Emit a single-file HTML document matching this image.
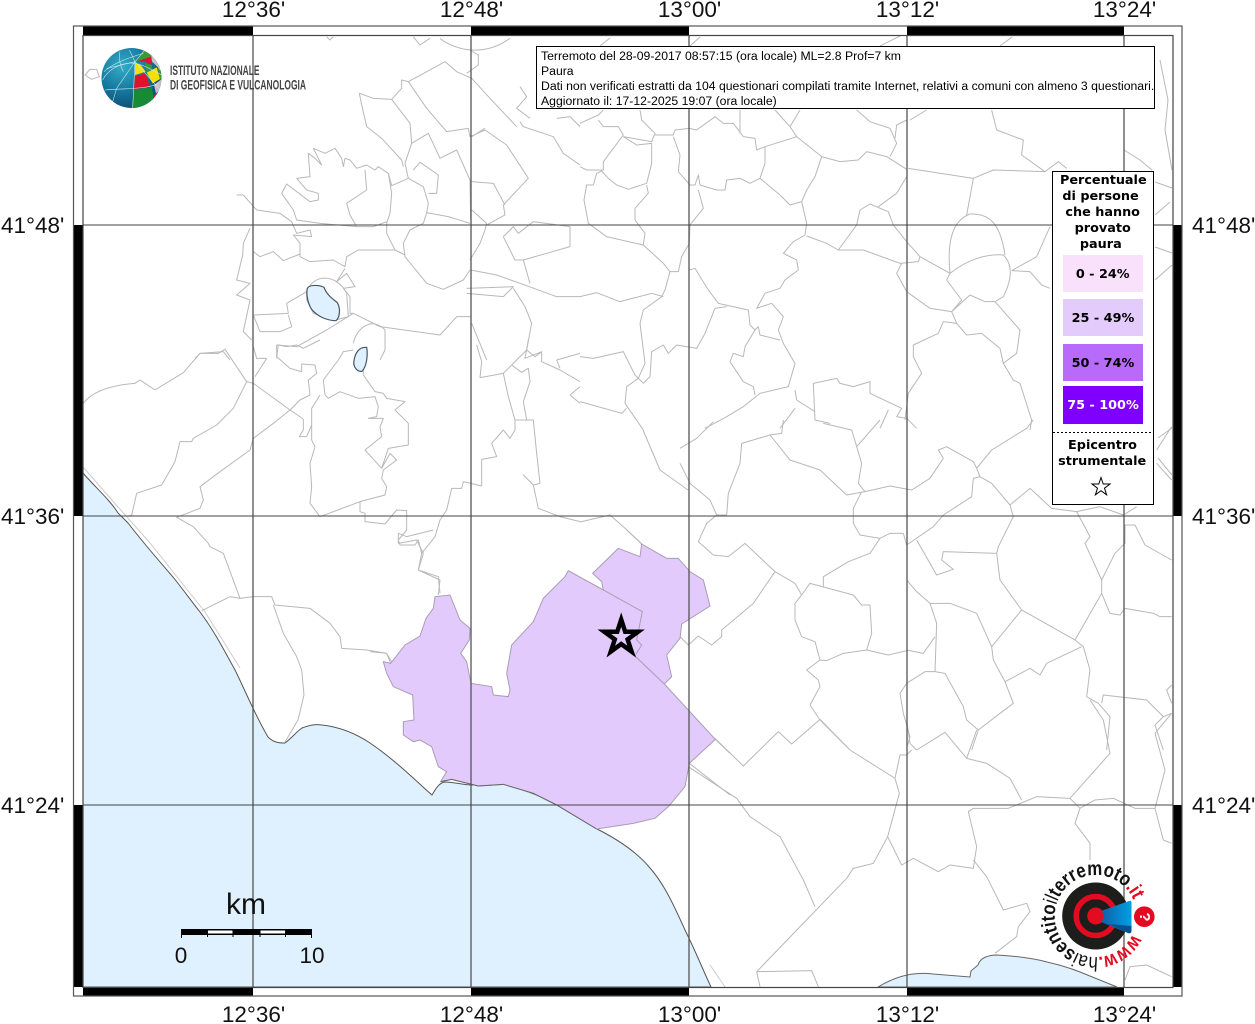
<!DOCTYPE html>
<html><head><meta charset="utf-8"><title>Mappa</title>
<style>
html,body{margin:0;padding:0;background:#fff;width:1255px;height:1024px;overflow:hidden}
svg{display:block;position:absolute;left:0;top:0}
.b path{fill:none;stroke:#b8b8b8;stroke-width:1;stroke-linejoin:round;vector-effect:non-scaling-stroke}
.t{font-family:"Liberation Sans",sans-serif;font-size:22.5px;fill:#111}
.l{font-family:"DejaVu Sans",sans-serif;font-size:12.8px;font-weight:bold;fill:#000;text-anchor:middle}
.i{font-family:"Liberation Sans",sans-serif;font-size:12.23px;fill:#000}
</style></head><body>
<svg width="1255" height="1024" viewBox="0 0 1255 1024" xmlns="http://www.w3.org/2000/svg">
<defs>
<radialGradient id="gb" cx="35%" cy="30%" r="80%"><stop offset="0" stop-color="#35acc8"/><stop offset=".55" stop-color="#14759c"/><stop offset="1" stop-color="#0a4668"/></radialGradient>
<linearGradient id="cone" x1="0" x2="1" y1="0" y2="0"><stop offset="0" stop-color="#0f5fa8"/><stop offset="1" stop-color="#00a0e3"/></linearGradient>
<clipPath id="gc"><circle cx="131.5" cy="78" r="30"/></clipPath>
</defs>
<rect width="1255" height="1024" fill="#fff"/>

<!-- sea -->
<path d="M83,473 C95,487 110,500 118,513 L128,523 C145,545 160,562 173,577 C185,592 192,602 200,612 C215,632 225,652 235,670 C245,690 255,715 268,737 C274,743 280,743 285,743 C292,738 296,732 302,728 C310,725 315,724 322,725 C340,727 355,733 370,743 C395,760 415,780 432,795 C435,790 438,784 444,782 C455,782 462,785 472,785 C485,784 495,782 503,784 C525,790 545,798 557,805 C575,816 585,822 597,829 C615,838 635,850 650,868 C665,885 675,908 685,930 C695,950 703,970 711,987 L83,987 Z" fill="#dff1fe" stroke="#555" stroke-width="1"/>
<path d="M878,987 C888,981 898,977 907,975 C918,973 925,973 933,974 L970,977 L971,971 L978,965 C980,958 988,955 997,955 C1015,956 1032,958 1047,962 C1060,965 1070,968 1080,972 L1117,987 Z" fill="#dff1fe" stroke="#666" stroke-width="1"/>
<path d="M83,467 L118,507 L150,543 L205,612 L240,668 M710,965 L725,987" fill="none" stroke="#ccc" stroke-width="1"/>

<!-- boundaries -->
<g class="b">
<g transform="translate(80,30) scale(.33333)">
<path d="M15,135 L30,118 L50,118 L58,140 L35,148 Z"/>
<path d="M1000,20 L1020,45 L1050,25 M1080,25 C1110,50 1200,90 1290,25"/>
<path d="M985,155 L1095,95 L1130,125 L1175,145 L1230,205 L1310,290"/>
<path d="M985,155 L965,150 L965,175 L935,208 L880,205 L838,190 L845,225 L860,290 L905,325 L965,390 L970,410"/>
<path d="M935,208 L990,280 L995,340 L975,400 L985,445 L935,467 L925,430 L895,410 L885,420 L860,405 L830,415 L810,390 L795,385 L790,410 L785,385 L765,355 L735,370 L700,355 L725,405 L705,385 L685,370 L690,440 L650,445 L680,480 L715,490 L715,510 L690,515 L620,462 L605,490 L640,540 L650,570 L720,580 L830,590 L880,590 L920,575"/>
<path d="M985,155 L1040,235 L1100,305 L1165,295 L1170,320 L1215,300 L1280,345 L1345,445 L1270,525 L1275,555 L1220,585"/>
<path d="M995,340 L1045,310 L1080,385 L1130,360 L1170,450 L1172,570"/>
<path d="M985,445 L1030,470 L1045,520 L1040,548 L1030,580 L990,600 L970,640 L975,680 L1040,760 L1090,778 L1150,750 L1170,720"/>
<path d="M1000,420 L1020,397 L1075,435 L1070,490 L1045,490"/>
<path d="M855,420 L860,480 L800,520 L810,555 L830,590"/>
<path d="M925,430 L935,490 L930,550 L920,580 L920,610 L945,660 L975,675"/>
<path d="M1040,548 L1105,560 L1170,580"/>
<path d="M470,495 L490,495 L530,540 L600,550 L635,575 L650,610 L690,600 L695,620 L640,615 L660,640 L660,680 L690,695 L760,690 L795,710 L800,680 L835,660 L945,660"/>
<path d="M510,595 L490,640 L488,675 L470,750 L510,760 L470,795 L510,810 L490,905 L515,930"/>
<path d="M520,665 L540,680 L580,665 L610,692 L660,672"/>
<path d="M795,715 L770,755 L800,730 L825,770 L790,775 L810,800 L810,850 L820,850 L900,890 L1080,915 L1130,860 L1172,860"/>
<path d="M680,785 C700,730 770,730 800,790 L805,860 L760,872 L700,850 L680,810 Z"/>
<path d="M680,785 L620,820 L625,850 L520,855 L540,905 L600,905 L635,890 L625,855"/>
<path d="M820,850 L740,900 L650,950 L590,945 L590,985"/>
<path d="M820,940 C830,890 880,860 915,900 L915,960 L900,990"/>
<path d="M345,985 L360,970 L430,965 L450,990"/>
<path d="M1172,720 L1250,735 L1320,760 L1430,800 L1500,800 M1160,775 L1300,770 L1270,800 L1160,790"/>
<path d="M1300,775 L1335,830 L1355,880 L1335,985 L1385,965 M1175,880 L1220,990"/>
<path d="M1270,620 L1300,590 L1315,610 L1360,575 L1470,590 L1470,650 L1400,670 L1330,690 L1350,760 M1270,620 L1305,690 L1330,690"/>
<path d="M1320,275 L1330,290 L1420,320 L1450,370 L1500,405 M1430,265 L1470,260 L1500,290"/>
<path d="M1175,455 L1240,460 L1275,525 M1175,540 L1220,580 L1215,600 L1200,640 L1170,690 M1175,320 L1215,295 M1160,130 L1195,105 L1195,75 L1170,60 M1320,170 L1340,200 L1310,235 L1350,265"/>
<path d="M740,20 L750,30 L760,20"/>
</g>
<g transform="translate(580,100) scale(.33333)">
<path d="M0,70 L55,45 L70,30 M55,60 L70,80 L115,80 L130,105 L70,185 L70,210 L20,210 L0,200"/>
<path d="M180,30 L185,60 L225,100 L215,125 L130,110"/>
<path d="M130,110 L170,135 L215,130 L215,190 L200,250 L145,268 L110,255 L85,235 L65,213 L50,220 L40,255 L20,255 L12,300 L25,370 L80,410 L190,435 L250,490 L270,515 L255,570 L245,590 L190,630 L180,670 L195,790 L175,835 L140,860 L135,910 L190,990"/>
<path d="M225,105 L280,105 L285,90 L328,85 L350,90 L405,50 L430,70 L460,70 L490,110 L525,115 L530,150 L555,140 L650,110 L725,170 L780,185 L835,180 L860,155 L920,170 L980,208"/>
<path d="M280,110 L300,165 L295,215 L330,255 L345,255 L355,225 L360,255 L410,270 L435,270 L440,240 L480,235 L510,250 L540,235 L600,285 L630,315 L665,305 L680,370 L675,405 L640,425 L610,460 L650,480 L655,510 L615,540 L600,565 L555,580 L530,625 L575,610 L610,650 L595,690 L610,730 L645,790 L625,860 L540,880 L490,920 L440,950 L375,985"/>
<path d="M555,140 L555,190 L540,235 M725,170 L705,230 L680,270 L665,305 M480,30 L480,100 M630,80 L660,30 M585,30 L630,80 L650,110"/>
<path d="M830,30 L870,65 L930,85 L950,130 L930,170 M980,60 L950,75 L945,115 M990,60 L1040,30"/>
<path d="M985,205 L1180,235 L1240,210 L1395,215 L1325,165 L1330,120 L1250,90 L1235,30 M1395,215 L1435,185 L1460,205 M1180,235 L1160,345"/>
<path d="M1110,520 C1100,420 1120,360 1170,342 C1220,340 1260,360 1275,465 M1110,520 C1160,480 1220,460 1270,465 C1295,490 1300,530 1270,590 L1245,605 L1215,605 L1170,585 L1115,635"/>
<path d="M1295,512 L1350,515 L1385,555 L1410,565 M1295,512 L1370,470 L1410,380"/>
<path d="M1110,520 L1020,470 L980,425 L940,375 L925,335 L870,312 L840,330 L830,375 L775,450 L740,430 L680,408"/>
<path d="M775,450 L850,450 L960,490 L1015,485 L1020,470 M895,320 L950,280 L980,230"/>
<path d="M965,490 L950,520 L980,575 L1050,625 L1115,635 L1145,600 L1100,540 L1110,520"/>
<path d="M1115,635 L1130,670 L1160,705 L1205,700 L1260,745 L1270,790 L1310,760 L1320,690 L1245,605"/>
<path d="M1130,670 L1090,665 L1075,700 L1000,735 L1000,770 L1025,820 L985,880 L975,960"/>
<path d="M1270,790 L1300,840 L1320,850 L1355,960 L1350,990"/>
<path d="M870,880 L965,925 L950,950 L980,955 L1010,985 M870,880 L870,845 L820,860 L780,850 L770,835 L700,850 L705,960 L750,970"/>
<path d="M650,900 L705,935 M650,900 L645,870 M645,925 L600,985 M925,930 L900,985"/>
<path d="M0,590 L50,578 L120,605 L215,580 L250,590"/>
<path d="M405,625 L375,700 L350,745 L290,735 L265,760 L250,735 L215,755 L210,830 L190,850 L165,825 L130,755 L40,775 L0,770"/>
<path d="M328,510 L345,505 L385,570 L415,610 L505,630 L510,675 L525,690 L535,680 L540,705 L600,720 M405,625 L440,620"/>
<path d="M525,690 L495,740 L490,770 L460,760 L450,785 L490,845 L520,860 L525,885"/>
<path d="M270,515 L295,515 L305,470 L328,430 L330,375 L370,325 L355,270"/>
<path d="M0,905 L125,940 L140,925 M200,255 L205,280 L165,325 L165,360 L195,400 L190,435"/>
</g>
<g transform="translate(80,340) scale(.33333)">
<path d="M10,190 C40,150 100,135 165,130 L180,120 L225,150 L310,98 L360,40 L415,40 L435,28 L500,125 L520,130 L630,210 L670,237"/>
<path d="M500,125 L460,205 L410,255 L340,295 L335,305 L300,305 L285,365 L245,435 L170,460 L155,525 L145,530"/>
<path d="M630,210 L580,250 L520,295 L510,330 L420,395 L360,440 L370,480 L360,505 L290,532 L340,560 L385,610 L390,620 L430,640 L480,775 L450,770 L365,812"/>
<path d="M480,775 L520,770 L575,770 L585,795 L690,805 L750,850 L780,890 L785,925 L860,930 L920,940 L935,965"/>
<path d="M580,795 L610,880 L650,950 L665,990"/>
<path d="M630,210 L660,180 L690,165 L685,120 L710,100 L705,75 L665,72 L665,95 L630,85 L590,50 L595,15 L620,20 L650,15 L670,25 L720,0"/>
<path d="M520,20 L530,55 L560,55 L525,110"/>
<path d="M735,165 L730,120 L775,60 L790,35 L820,30"/>
<path d="M735,165 L745,175 L780,155 L835,175 L885,170 L895,200 L890,230 L865,235 L910,235 L900,260 L905,290 L855,330 L905,385 L925,325 L985,315 L985,250 L945,210 L975,185 L920,175 L910,160 L885,155 L850,105 L850,90"/>
<path d="M720,165 L695,205 L695,300 L705,320 L690,370 L695,440 L690,490 L720,530 L840,485 L915,465 L920,440 L905,415 L910,390 L950,360 L930,340 L905,385"/>
<path d="M670,237 L670,270 L658,290 L680,290 L695,255"/>
<path d="M840,485 L840,515 L855,520 L855,545 L915,552 L950,510 L980,512 L980,570 L955,600 L960,615 L1005,615 L1015,600 L1025,640 L1015,690 L1075,710 L1080,760"/>
<path d="M1025,640 L1065,590 L1080,540 L1100,510 L1115,445 L1145,445 L1150,425 L1205,438 L1205,358 L1250,350 L1235,310 L1270,270 L1290,295 L1305,270 L1305,240 L1360,240 L1370,340 L1380,430 L1360,435 L1330,405 L1360,435 L1375,505 L1440,530 L1500,545"/>
<path d="M1305,240 L1285,170 L1270,100 L1295,75 L1325,97 L1345,85 L1350,125 L1330,185 L1340,240"/>
<path d="M1270,100 L1200,113 L1205,65 L1190,15 M1295,75 L1340,30 L1345,0 M1340,30 L1365,50 L1385,35 L1385,65 L1440,90 L1500,125 M1430,60 L1500,40 M1430,60 L1440,85 M1470,165 L1500,140 M1470,165 L1500,190"/>
</g>
<g transform="translate(680,420) scale(.33333)">
<path d="M0,85 L50,55 L100,5 M0,130 L30,190 L90,240 L110,285 L80,310 L55,365 L100,405 L145,410 L195,370 L285,455 L345,490 L365,525 L345,550 L345,600 L365,650 L405,665 L420,720 L380,750 L415,780 L420,800 L390,855 L420,900 L500,980"/>
<path d="M140,285 L145,220 L180,130 L185,70 L270,45 L305,40 L310,0"/>
<path d="M270,45 L330,120 L420,150 L500,225 L555,215 L630,198 L695,210 L750,175 L790,115 L775,90 L800,80 L880,125 L890,145 L935,90 L1040,25 L1060,0"/>
<path d="M110,285 L140,285 M555,215 L535,190 L545,130 L530,80 L515,30 L430,10 M530,80 L600,0"/>
<path d="M545,215 L520,265 L520,310 L540,345 L600,355 L630,340 L670,340 L680,375 M600,355 L570,400 L505,425 L430,470 L430,500"/>
<path d="M365,525 L390,490 L520,525 L545,555 L570,555 L575,640 L560,690 L625,705 L680,692 M560,690 L490,700 L440,722 L420,720"/>
<path d="M285,455 L220,550 L125,630 L125,650 L95,675 L55,648 L25,675 L0,650"/>
<path d="M890,145 L900,170 L880,175 L875,230 L790,285 L760,320 L680,375"/>
<path d="M900,170 L935,190 L990,255 L1000,290 L980,330 L955,380 L950,400 L790,395 L785,420 L820,448 L770,465 L710,360"/>
<path d="M950,400 L960,480 L1025,570 L1185,660 L1210,680 L1230,750 L1220,830 L1255,850 L1290,890 L1280,990"/>
<path d="M1025,570 L935,680 L890,580 L810,550 L750,550 L710,515 L680,480"/>
<path d="M750,550 L770,610 L765,755 L795,760 L850,860 L860,900 L895,930 L875,990 M895,930 L960,880 L1000,850 L975,785 L1050,745 L1080,765 L1100,730 L1205,680"/>
<path d="M765,650 L730,700 L680,690 M935,680 L940,720 L975,785 M765,755 L735,755 L680,790 L660,820 L670,880 L690,950 L680,985"/>
<path d="M990,255 L1050,205 L1115,265 L1190,275 L1260,260 L1330,285 L1370,260"/>
<path d="M1190,275 L1230,350 L1215,370 L1265,480 L1305,400 L1335,370 L1335,315 L1365,315 L1395,375 L1475,420"/>
<path d="M1265,480 L1265,520 L1185,660 M1265,520 L1290,580 L1320,585 L1335,565 L1420,580 L1440,590 L1475,590"/>
<path d="M1265,850 L1270,825 L1400,840 L1450,890 L1475,880 M1450,890 L1425,915 L1450,990 M1475,795 L1460,810 L1475,850 M1430,130 L1475,180 M1430,90 L1475,20"/>
</g>
<g transform="translate(680,700) scale(.33333)">
<path d="M105,115 L190,198 L295,95 L335,132 L420,58 L510,150 L645,235 L658,280 L623,410 L580,490 L520,505 L500,535 L230,815 L240,860"/>
<path d="M25,200 L170,295 L210,350 L300,410 L370,540 L405,620 M645,235 L660,165 L680,165 L695,150"/>
<path d="M623,410 L665,495 L700,475 L775,515 L810,495 L880,505 L890,440 L865,335 L880,325 L985,325 L1070,290 L1170,295 L1200,325 L1245,300 L1300,295 L1365,325 L1425,325 L1450,420 L1475,430"/>
<path d="M1170,295 L1290,160 L1270,60 L1230,0"/>
<path d="M880,480 L920,530 L970,630 L1040,610 L1050,635 L1015,680 L1010,710 L945,760"/>
<path d="M1200,325 L1185,370 L1230,430 L1230,480"/>
<path d="M1025,300 L990,235 L920,190 L860,175 L795,97 L710,150 L690,130 L680,60 M860,175 L890,90"/>
<path d="M1425,325 L1455,210 L1425,100 L1475,40 M1335,840 L1350,800 L1400,795 L1475,830"/>
<path d="M230,815 L395,812 L415,860"/>
</g>
<g transform="translate(370,530) scale(.33333)">
<path d="M0,365 L50,370 L62,400 M205,195 L210,150 L145,120 L160,70 L140,30 L85,40 L85,10 L110,20 L190,0"/>
<path d="M770,0 L815,42 M1036,628 L1080,670 M958,700 L1080,795"/>
</g>
<path d="M301.7,670 L304,695 L298,720 L285,742"/>
<path d="M580,522 L610,515 L627,530 L642,544 M643,430 L660,470 L688,490 M600,46 L610,38 M690,46 L700,37 M880,46 L900,36 M1000,46 L1012,37"/>
<path d="M1155,182 L1172,188 M1155,215 L1170,202 M1155,247 L1172,253 M1155,280 L1172,265 M1158,438 L1172,428 M1158,458 L1172,475 M1160,60 L1168,100 L1165,130 L1172,170 M1124,150 L1140,160 L1152,170"/>
</g>

<!-- lakes -->
<g transform="translate(230,230) scale(.33333)">
<path d="M232,175 C238,163 270,165 282,172 C290,195 310,208 322,218 C332,235 330,262 318,272 C295,272 265,262 245,238 C233,220 228,190 232,175 Z" fill="#dff1fe" stroke="#445566" stroke-width="3.6"/>
<path d="M372,392 C375,372 385,350 410,352 C414,375 410,410 396,424 C382,426 368,410 372,392 Z" fill="#dff1fe" stroke="#445566" stroke-width="3.6"/>
</g>

<!-- felt area -->
<g transform="translate(370,530) scale(.33333)">
<path d="M40,395 L62,400 L105,345 L150,318 L168,265 L190,235 L195,200 L240,195 L270,270 L300,295 L298,330 L272,370 L290,395 L303,460 L365,470 L370,495 L415,500 L420,480 L410,430 L425,345 L490,275 L520,205 L585,140 L595,122 L700,180 L695,155 L668,130 L745,55 L810,80 L815,42 L890,85 L925,85 L960,125 L1000,150 L1020,228 L935,282 L930,325 L890,375 L905,440 L883,462 L1036,628 L958,700 L945,770 L895,830 L855,865 L790,880 L680,897 L560,825 L490,790 L400,763 L325,768 L245,748 L212,755 L230,725 L205,710 L185,650 L150,630 L130,635 L100,615 L100,575 L132,570 L128,495 L70,470 L50,430 Z" fill="#e2cbfc" stroke="#a99cb5" stroke-width="3"/>
<path d="M700,180 L817,245 L800,330 L815,345 L795,378 L883,462" fill="none" stroke="#a99cb5" stroke-width="3"/>
<path d="M325,768 L400,763 L490,790 L560,825 L680,897 M212,755 L245,748 L325,768" fill="none" stroke="#666" stroke-width="3"/>
</g>

<!-- grid -->
<g fill="none">
<path d="M253,35V987M471,35V987M689,35V987M907,35V987M1124,35V987" stroke="#555" stroke-width="1.3"/>
<path d="M83,225H1173M83,516H1173M83,805H1173" stroke="#444" stroke-width="1.1"/>
</g>
<!-- frame -->
<g fill="#000">
<rect x="83" y="26" width="170" height="9.5"/><rect x="471" y="26" width="218" height="9.5"/><rect x="907" y="26" width="217" height="9.5"/>
<rect x="83" y="987.5" width="170" height="8.5"/><rect x="471" y="987.5" width="218" height="8.5"/><rect x="907" y="987.5" width="217" height="8.5"/>
<rect x="73.5" y="225" width="9.5" height="291"/><rect x="73.5" y="805" width="9.5" height="182"/>
<rect x="1172.5" y="225" width="9.5" height="291"/><rect x="1172.5" y="805" width="9.5" height="182"/>
</g>
<rect x="73.5" y="26" width="1108.5" height="970" fill="none" stroke="#555" stroke-width="1.2"/>
<rect x="83" y="35.5" width="1090" height="952" fill="none" stroke="#444" stroke-width="1.2"/>

<!-- tick labels -->
<g class="t" text-anchor="middle">
<text x="253.5" y="17">12°36'</text><text x="471.5" y="17">12°48'</text><text x="689.5" y="17">13°00'</text><text x="907.5" y="17">13°12'</text><text x="1124.5" y="17">13°24'</text>
<text x="253.5" y="1022">12°36'</text><text x="471.5" y="1022">12°48'</text><text x="689.5" y="1022">13°00'</text><text x="907.5" y="1022">13°12'</text><text x="1124.5" y="1022">13°24'</text>
</g>
<g class="t">
<text x="1" y="233">41°48'</text><text x="1" y="524">41°36'</text><text x="1" y="813">41°24'</text>
<text x="1192" y="233">41°48'</text><text x="1192" y="524">41°36'</text><text x="1192" y="813">41°24'</text>
</g>

<!-- star -->
<path d="M621.2,619.6 L625.2,631.8 L638,631.8 L627.6,639.4 L631.6,651.6 L621.2,644 L610.8,651.6 L614.8,639.4 L604.4,631.8 L617.2,631.8 Z" fill="#e2cbfc" stroke="#000" stroke-width="4.5" stroke-miterlimit="10"/>

<!-- scale bar -->
<text x="246" y="914" font-family="Liberation Sans,sans-serif" font-size="30" text-anchor="middle" fill="#111">km</text>
<rect x="181" y="929" width="131" height="6" fill="#000"/>
<rect x="207.5" y="930.5" width="25.5" height="3" fill="#fff"/><rect x="260" y="930.5" width="25.5" height="3" fill="#fff"/>
<path d="M181.5,929V938M207.5,929V937M233,929V937M260,929V937M285.5,929V937M311.5,929V938" stroke="#000" stroke-width="1"/>
<text x="181" y="963" font-family="Liberation Sans,sans-serif" font-size="22.5" text-anchor="middle" fill="#111">0</text>
<text x="312" y="963" font-family="Liberation Sans,sans-serif" font-size="22.5" text-anchor="middle" fill="#111">10</text>

<!-- INGV logo -->
<circle cx="131.5" cy="78" r="30" fill="url(#gb)"/>
<g clip-path="url(#gc)">
<g transform="translate(80,30) scale(.33333)">
<path d="M168,95 L190,60 L215,75 L213,80 Z" fill="#3a9a35"/>
<path d="M170,95 L213,80 L216,105 L195,95 Z" fill="#e2122c"/>
<path d="M213,72 L248,100 L248,135 L232,110 L216,95 Z" fill="#c9bccb"/>
<path d="M165,100 L165,135 L197,125 L182,105 Z" fill="#f5e000"/>
<path d="M195,100 L216,105 L214,118 L200,126 Z" fill="#3a9a35"/>
<path d="M200,128 L230,112 L240,147 L218,160 Z" fill="#f5e000"/>
<path d="M232,112 L250,130 L246,150 L240,147 Z" fill="#3a9a35"/>
<path d="M165,138 L197,130 L210,170 L162,178 Z" fill="#e2122c"/>
<path d="M222,165 L248,145 L240,180 L228,190 Z" fill="#c9bccb"/>
<path d="M160,180 L215,172 L222,205 L190,240 L155,240 Z" fill="#178a35"/>
<path d="M222,195 L232,188 L222,208 Z" fill="#e2122c"/>
<g fill="none" stroke="#d8edf2" stroke-width="1.6">
<path d="M165,95 L158,235"/>
<path d="M165,95 L245,185 M165,95 L110,175 L95,225 M165,95 L80,115 M165,95 L148,60 M165,95 L195,60"/>
<path d="M68,150 C85,115 130,95 165,100 C195,105 225,125 245,135"/>
<path d="M120,65 C115,80 118,100 130,125 M72,125 C100,100 140,85 190,70"/>
<path d="M75,180 C105,175 200,180 235,160"/>
</g>
</g>
</g>
<g font-family="Liberation Sans,sans-serif" font-size="14" font-weight="bold" fill="#444">
<text x="170" y="75" textLength="89.5" lengthAdjust="spacingAndGlyphs">ISTITUTO NAZIONALE</text>
<text x="170" y="89.5" textLength="136" lengthAdjust="spacingAndGlyphs">DI GEOFISICA E VULCANOLOGIA</text>
</g>

<!-- info box -->
<rect x="536.5" y="46.5" width="618" height="62" fill="#fff" stroke="#000" stroke-width="1"/>
<g class="i">
<text x="541" y="60">Terremoto del 28-09-2017 08:57:15 (ora locale) ML=2.8 Prof=7 km</text>
<text x="541" y="75">Paura</text>
<text x="541" y="90">Dati non verificati estratti da 104 questionari compilati tramite Internet, relativi a comuni con almeno 3 questionari.</text>
<text x="541" y="105">Aggiornato il: 17-12-2025 19:07 (ora locale)</text>
</g>

<!-- legend -->
<rect x="1052.5" y="171.5" width="101" height="333" fill="#fff" stroke="#000" stroke-width="1"/>
<rect x="1063" y="255" width="80" height="37" fill="#f9e1fb"/>
<rect x="1063" y="299" width="80" height="37" fill="#e3ccfb"/>
<rect x="1063" y="344" width="80" height="37" fill="#b86bfb"/>
<rect x="1063" y="386" width="80" height="38" fill="#7f00ff"/>
<path d="M1053,432.5H1153" stroke="#000" stroke-width="1" stroke-dasharray="2,2"/>
<g class="l">
<text x="1103.3" y="184">Percentuale</text>
<text x="1100.5" y="200">di persone</text>
<text x="1102.7" y="216">che hanno</text>
<text x="1102.7" y="232">provato</text>
<text x="1100.8" y="248">paura</text>
<text x="1102.7" y="278">0 - 24%</text>
<text x="1103" y="322">25 - 49%</text>
<text x="1103" y="367">50 - 74%</text>
<text x="1103" y="409" style="fill:#fff">75 - 100%</text>
<text x="1102.5" y="449">Epicentro</text>
<text x="1102.2" y="465">strumentale</text>
</g>
<path d="M1101,477.5 L1103.2,484 L1110,484 L1104.5,488.2 L1106.6,494.8 L1101,490.7 L1095.4,494.8 L1097.5,488.2 L1092,484 L1098.8,484 Z" fill="#fff" stroke="#000" stroke-width="1"/>

<!-- hai sentito logo -->
<circle cx="1095.7" cy="916" r="33.5" fill="#1d1d1b"/>
<circle cx="1095.7" cy="916" r="19.5" fill="none" stroke="#e30b20" stroke-width="5.5"/>
<circle cx="1095.7" cy="916" r="8.5" fill="#e30b20"/>
<path d="M1101,911 L1129,901 Q1131.5,900 1131.5,903 L1131.5,931 Q1131,934 1128,933 L1101,922 Q1106,916 1101,911 Z" fill="url(#cone)"/>
<path d="M1108,924 L1131.5,926 L1131.5,931 Q1131,934 1128,933 Z" fill="#0a4f92"/>
<circle cx="1144.3" cy="916.7" r="10.3" fill="#e30b20"/>
<text x="0" y="0" transform="translate(1140,917) rotate(90)" font-family="Liberation Sans,sans-serif" font-size="15" font-weight="bold" fill="#fff" text-anchor="middle">?</text>
<path id="arc" d="M1132.6,934 A41,41 0 1 1 1133,899" fill="none"/>
<text font-family="Liberation Sans,sans-serif" font-size="20" font-weight="bold" fill="#111"><textPath href="#arc" textLength="222" lengthAdjust="spacingAndGlyphs"><tspan fill="#e30b20">www.</tspan><tspan font-weight="normal">hai</tspan>sentito<tspan font-weight="normal">il</tspan>terremoto<tspan fill="#e30b20">.it</tspan></textPath></text>
</svg>
</body></html>
